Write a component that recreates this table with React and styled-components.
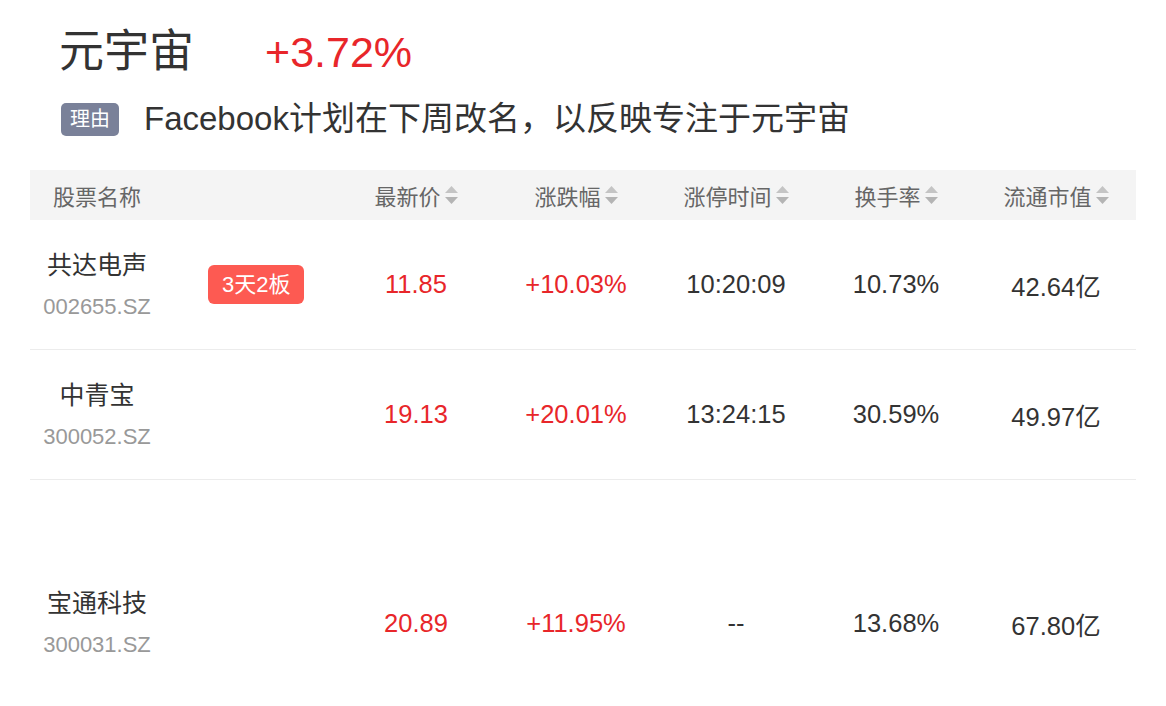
import React from "react";
import styled, { createGlobalStyle } from "styled-components";

const GlobalStyle = createGlobalStyle`
  body {
    margin: 0;
    background: #fff;
    font-family: "Liberation Sans", "Noto Sans CJK SC", Arial, sans-serif;
    color: #333;
  }
`;

const Page = styled.div`
  width: 1166px;
  height: 706px;
  overflow: hidden;
  padding: 0 30px;
  box-sizing: border-box;
`;

// top part: topic + change
const Head = styled.div`
  display: flex;
  align-items: center;
  padding: 24px 0 0 29px;
  height: 56px;
`;

const Topic = styled.div`
  font-size: 45px;
  line-height: 56px;
  color: #333;
`;

const Change = styled.div`
  font-size: 43px;
  line-height: 56px;
  color: #e8262a;
  margin-left: 71px;
`;

const Reason = styled.div`
  display: flex;
  align-items: center;
  padding: 19px 0 0 31px;
`;

const Tag = styled.span`
  display: inline-block;
  background: #7a8199;
  color: #fff;
  font-size: 20px;
  line-height: 33px;
  padding: 0 9px;
  border-radius: 5px;
`;

const ReasonText = styled.span`
  font-size: 33px;
  line-height: 40px;
  margin-left: 25px;
  color: #333;
`;

const Table = styled.div`
  margin-top: 31px;
  width: 1106px;
`;

const Row = styled.div`
  display: grid;
  grid-template-columns: 306px repeat(5, 160px);
  align-items: center;
  height: ${p => p.h}px;
  border-bottom: ${p => (p.head ? "none" : "1px solid #ececec")};
  background: ${p => (p.head ? "#f4f4f4" : "#fff")};
`;

const HeadCell = styled.div`
  display: flex;
  align-items: center;
  justify-content: ${p => (p.left ? "flex-start" : "center")};
  padding-left: ${p => (p.left ? "23px" : "0")};
  font-size: 22px;
  color: #666;
`;

const Cell = styled.div`
  text-align: center;
  font-size: 25.5px;
  color: ${p => (p.red ? "#e8262a" : "#333")};
`;

const NameCell = styled.div`
  display: flex;
  align-items: center;
  padding-left: 13px;
`;

const NameBox = styled.div`
  width: 108px;
  text-align: center;
`;

const Name = styled.div`
  font-size: 25px;
  line-height: 30px;
  color: #333;
  white-space: nowrap;
`;

const Code = styled.div`
  font-size: 22px;
  line-height: 26px;
  margin-top: 14px;
  color: #999;
`;

const Badge = styled.span`
  margin-left: 57px;
  background: #fd5a52;
  color: #fff;
  font-size: 22px;
  line-height: 39px;
  padding: 0 14px;
  border-radius: 6px;
  white-space: nowrap;
`;

const Sort = () => (
  <svg width="13" height="18" viewBox="0 0 13 18" style={{ marginLeft: 4 }}>
    <polygon points="6.5,0 13,7 0,7" fill="#c4c4c4" />
    <polygon points="0,11 13,11 6.5,18" fill="#b4b4b4" />
  </svg>
);

const stocks = [
  { name: "共达电声", code: "002655.SZ", tag: "3天2板", price: "11.85", pct: "+10.03%", time: "10:20:09", turn: "10.73%", cap: "42.64亿", h: 129 },
  { name: "中青宝", code: "300052.SZ", price: "19.13", pct: "+20.01%", time: "13:24:15", turn: "30.59%", cap: "49.97亿", h: 129 },
  { name: "宝通科技", code: "300031.SZ", price: "20.89", pct: "+11.95%", time: "--", turn: "13.68%", cap: "67.80亿", h: 286 },
];

const cols = ["最新价", "涨跌幅", "涨停时间", "换手率", "流通市值"];

export default function App() {
  return (
    <Page>
      <GlobalStyle />
      <Head>
        <Topic>元宇宙</Topic>
        <Change>+3.72%</Change>
      </Head>
      <Reason>
        <Tag>理由</Tag>
        <ReasonText>Facebook计划在下周改名，以反映专注于元宇宙</ReasonText>
      </Reason>
      <Table>
        <Row head h={50}>
          <HeadCell left>股票名称</HeadCell>
          {cols.map(c => (
            <HeadCell key={c}>
              {c}
              <Sort />
            </HeadCell>
          ))}
        </Row>
        {stocks.map(s => (
          <Row key={s.code} h={s.h}>
            <NameCell>
              <NameBox>
                <Name>{s.name}</Name>
                <Code>{s.code}</Code>
              </NameBox>
              {s.tag && <Badge>{s.tag}</Badge>}
            </NameCell>
            <Cell red>{s.price}</Cell>
            <Cell red>{s.pct}</Cell>
            <Cell>{s.time}</Cell>
            <Cell>{s.turn}</Cell>
            <Cell>{s.cap}</Cell>
          </Row>
        ))}
      </Table>
    </Page>
  );
}
